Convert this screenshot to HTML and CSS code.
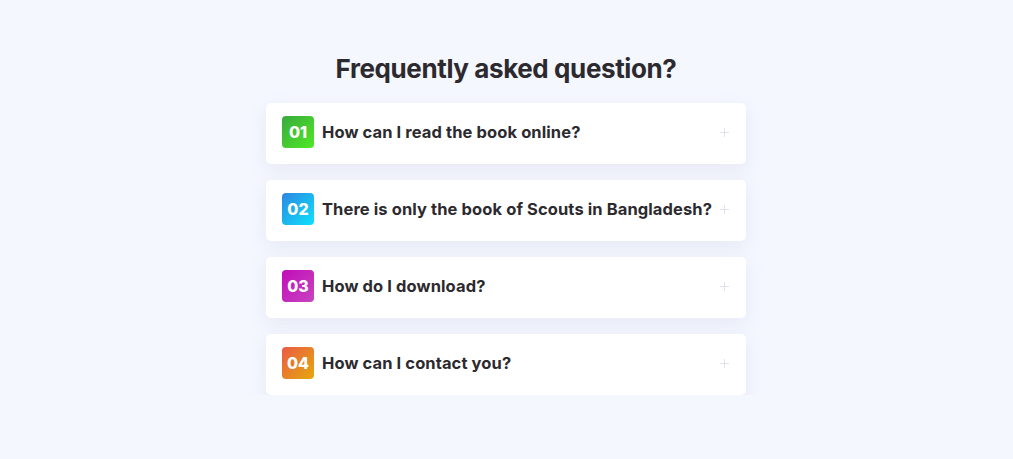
FILE: index.html
```html
<!DOCTYPE html>
<html lang="en">
<head>
<meta charset="utf-8">
<title>FAQ</title>
<link rel="stylesheet" href="styles.css">
</head>
<body>
<section class="faq">
  <h2 class="faq-title">Frequently asked question?</h2>
  <div class="faq-list">
    <div class="faq-item">
      <span class="badge badge-green">01</span>
      <span class="question">How can I read the book online?</span>
      <span class="plus"></span>
    </div>
    <div class="faq-item">
      <span class="badge badge-blue">02</span>
      <span class="question">There is only the book of Scouts in Bangladesh?</span>
      <span class="plus"></span>
    </div>
    <div class="faq-item">
      <span class="badge badge-purple">03</span>
      <span class="question">How do I download?</span>
      <span class="plus"></span>
    </div>
    <div class="faq-item">
      <span class="badge badge-orange">04</span>
      <span class="question">How can I contact you?</span>
      <span class="plus"></span>
    </div>
  </div>
</section>
</body>
</html>
```
FILE: styles.css
```css
* { box-sizing: border-box; }
html, body { margin: 0; padding: 0; }
body {
  background: #f4f7fe;
  font-family: "Inter", "Open Sans", sans-serif;
  color: #2c2a2e;
}
.faq {
  display: flex;
  flex-direction: column;
  align-items: center;
  padding: 51px 1px 0 0;
}
.faq-title {
  margin: 0 0 16px;
  font-size: 26px;
  line-height: 36px;
  letter-spacing: -0.4px;
  font-weight: 700;
  color: #2c2a2e;
}
.faq-list {
  width: 480px;
  display: flex;
  flex-direction: column;
  gap: 16px;
}
.faq-item {
  background: #fff;
  border-radius: 5px;
  box-shadow: 0 6px 18px rgba(160, 170, 200, 0.16);
  display: flex;
  align-items: center;
  padding: 13px 16px 16px;
  gap: 8px;
}
.badge {
  width: 32px;
  height: 32px;
  border-radius: 4px;
  display: flex;
  align-items: center;
  justify-content: center;
  color: #fff;
  font-size: 16px;
  font-weight: 800;
  flex: none;
}
.badge-green { background: linear-gradient(135deg, #3aa93f, #4fe925); }
.badge-blue { background: linear-gradient(135deg, #2e86e0, #0be2fd); }
.badge-purple { background: linear-gradient(135deg, #c20cb9, #c745c0); }
.badge-orange { background: linear-gradient(135deg, #eb5a45, #e4a90c); }
.question {
  flex: 1;
  font-size: 16.5px;
  letter-spacing: 0.1px;
  font-weight: 700;
  color: #2c2a2e;
  white-space: nowrap;
}
.plus {
  width: 9px;
  height: 9px;
  position: relative;
  flex: none;
  margin-right: 1px;
}
.plus::before, .plus::after {
  content: "";
  position: absolute;
  background: #dfe2ec;
}
.plus::before { left: 4px; top: 0; width: 1px; height: 9px; }
.plus::after { top: 4px; left: 0; width: 9px; height: 1px; }
```
